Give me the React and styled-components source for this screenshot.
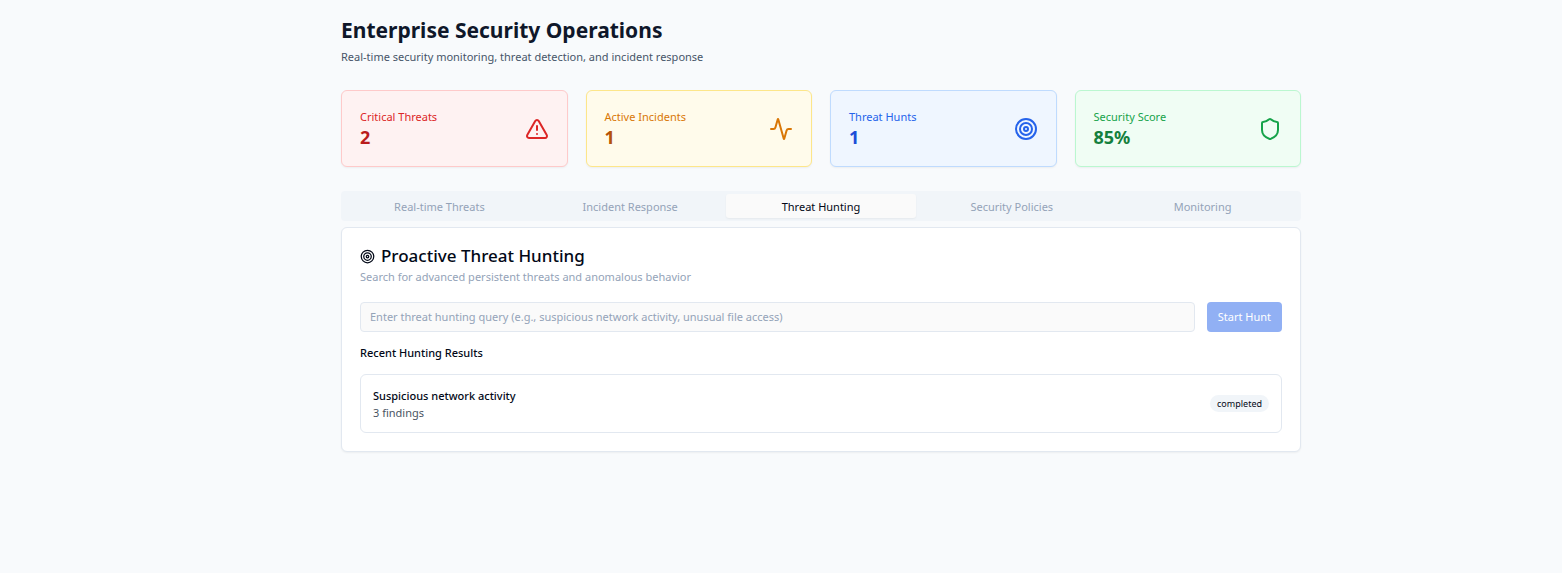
import React, { useState } from "react";
import styled, { createGlobalStyle } from "styled-components";
import { TriangleAlert, Activity, Target, Shield } from "lucide-react";

const GlobalStyle = createGlobalStyle`
  *, *::before, *::after { box-sizing: border-box; }
  body {
    margin: 0;
    background: #f8fafc;
    color: #020817;
    font-family: "Noto Sans", "Open Sans", sans-serif;
    font-size: 11px;
    line-height: 16px;
  }
  h1, h2, h3, p, dl, dt, dd, ul { margin: 0; padding: 0; }
  button, input { font: inherit; }
`;

const Page = styled.main`
  min-height: 100vh;
  padding: 15px 0 18px 80px;
`;

const Container = styled.div`
  max-width: 960px;
  margin: 0 auto;
`;

const Header = styled.header`
  margin-bottom: 24px;
`;

const PageTitle = styled.h1`
  color: #0f172a;
  font-size: 21px;
  font-weight: 700;
  line-height: 30px;
`;

const Subtitle = styled.p`
  padding-top: 3px;
  color: #475569;
  line-height: 18px;
`;

const StatGrid = styled.dl`
  display: grid;
  grid-template-columns: repeat(4, 1fr);
  gap: 18px;
  margin-bottom: 24px;
`;

const tones = {
  red: { bg: "#fef2f2", border: "#fecaca", label: "#dc2626", value: "#b91c1c" },
  amber: { bg: "#fffbeb", border: "#fde68a", label: "#d97706", value: "#b45309" },
  blue: { bg: "#eff6ff", border: "#bfdbfe", label: "#2563eb", value: "#1d4ed8" },
  green: { bg: "#f0fdf4", border: "#bbf7d0", label: "#16a34a", value: "#15803d" },
};

const StatCard = styled.div`
  display: flex;
  align-items: center;
  justify-content: space-between;
  padding: 18px;
  border: 1px solid ${(p) => tones[p.$tone].border};
  border-radius: 6px;
  background: ${(p) => tones[p.$tone].bg};
  color: ${(p) => tones[p.$tone].label};
  box-shadow: 0 1px 2px rgba(0, 0, 0, 0.05);
`;

const StatLabel = styled.dt`
  font-size: 11px;
`;

const StatValue = styled.dd`
  padding-top: 2px;
  color: ${(p) => tones[p.$tone].value};
  font-size: 18px;
  font-weight: 700;
  line-height: 21px;
`;

const TabList = styled.div`
  display: grid;
  grid-template-columns: repeat(5, 1fr);
  height: 30px;
  margin-bottom: 6px;
  padding: 3px;
  border-radius: 4px;
  background: #f1f5f9;
`;

const Tab = styled.button`
  padding: 2px 9px 0;
  border: 0;
  border-radius: 3px;
  background: ${(p) => (p.$active ? "#fafafa" : "transparent")};
  color: ${(p) => (p.$active ? "#020817" : "#94a3b8")};
  font-size: 11px;
  box-shadow: ${(p) => (p.$active ? "0 1px 2px rgba(0, 0, 0, 0.05)" : "none")};
  cursor: pointer;
`;

const Panel = styled.section`
  padding: 18px;
  border: 1px solid #e2e8f0;
  border-radius: 6px;
  background: #fff;
  box-shadow: 0 1px 2px rgba(0, 0, 0, 0.05);
`;

const PanelTitle = styled.h2`
  display: flex;
  align-items: center;
  gap: 6px;
  font-size: 17px;
  font-weight: 500;
  line-height: 20px;
`;

const PanelText = styled.p`
  padding-top: 3px;
  color: #94a3b8;
`;

const QueryForm = styled.form`
  display: flex;
  gap: 12px;
  margin: 17px 0 12px;
`;

const QueryInput = styled.input`
  flex: 1;
  min-width: 0;
  height: 30px;
  padding: 0 9px 2px;
  border: 1px solid #e2e8f0;
  border-radius: 4px;
  background: #fafafa;
  color: #020817;
  &::placeholder { color: #94a3b8; opacity: 1; }
`;

const StartButton = styled.button`
  height: 30px;
  padding: 0 11px;
  border: 0;
  border-radius: 4px;
  background: #2563eb;
  color: #fff;
  opacity: 0.5;
`;

const SectionTitle = styled.h3`
  margin-bottom: 12px;
  font-size: 11px;
  font-weight: 500;
  line-height: 18px;
`;

const ResultList = styled.ul`
  list-style: none;
`;

const ResultRow = styled.li`
  display: flex;
  align-items: center;
  justify-content: space-between;
  padding: 12px;
  border: 1px solid #e2e8f0;
  border-radius: 6px;
`;

const ResultName = styled.p`
  font-weight: 500;
  line-height: 18px;
`;

const ResultMeta = styled.p`
  color: #4b5563;
  font-size: 11px;
  line-height: 15px;
`;

const Badge = styled.span`
  padding: 0 7px;
  border-radius: 9px;
  background: #f1f5f9;
  font-size: 9px;
  font-weight: 400;
  line-height: 17px;
`;

const stats = [
  { label: "Critical Threats", value: "2", tone: "red", Icon: TriangleAlert },
  { label: "Active Incidents", value: "1", tone: "amber", Icon: Activity },
  { label: "Threat Hunts", value: "1", tone: "blue", Icon: Target },
  { label: "Security Score", value: "85%", tone: "green", Icon: Shield },
];

const tabs = ["Real-time Threats", "Incident Response", "Threat Hunting", "Security Policies", "Monitoring"];

export default function App() {
  const [active, setActive] = useState("Threat Hunting");
  const [query, setQuery] = useState("");

  return (
    <>
      <GlobalStyle />
      <Page>
        <Container>
          <Header>
            <PageTitle>Enterprise Security Operations</PageTitle>
            <Subtitle>Real-time security monitoring, threat detection, and incident response</Subtitle>
          </Header>

          <StatGrid>
            {stats.map(({ label, value, tone, Icon }) => (
              <StatCard key={label} $tone={tone}>
                <div>
                  <StatLabel>{label}</StatLabel>
                  <StatValue $tone={tone}>{value}</StatValue>
                </div>
                <Icon size={24} aria-hidden="true" />
              </StatCard>
            ))}
          </StatGrid>

          <TabList role="tablist">
            {tabs.map((tab) => (
              <Tab
                key={tab}
                type="button"
                role="tab"
                aria-selected={tab === active}
                $active={tab === active}
                onClick={() => setActive(tab)}
              >
                {tab}
              </Tab>
            ))}
          </TabList>

          <Panel role="tabpanel">
            <PanelTitle>
              <Target size={15} aria-hidden="true" />
              Proactive Threat Hunting
            </PanelTitle>
            <PanelText>Search for advanced persistent threats and anomalous behavior</PanelText>

            <QueryForm onSubmit={(e) => e.preventDefault()}>
              <QueryInput
                aria-label="Threat hunting query"
                placeholder="Enter threat hunting query (e.g., suspicious network activity, unusual file access)"
                value={query}
                onChange={(e) => setQuery(e.target.value)}
              />
              <StartButton type="submit" disabled={!query}>Start Hunt</StartButton>
            </QueryForm>

            <SectionTitle>Recent Hunting Results</SectionTitle>
            <ResultList>
              <ResultRow>
                <div>
                  <ResultName>Suspicious network activity</ResultName>
                  <ResultMeta>3 findings</ResultMeta>
                </div>
                <Badge>completed</Badge>
              </ResultRow>
            </ResultList>
          </Panel>
        </Container>
      </Page>
    </>
  );
}
